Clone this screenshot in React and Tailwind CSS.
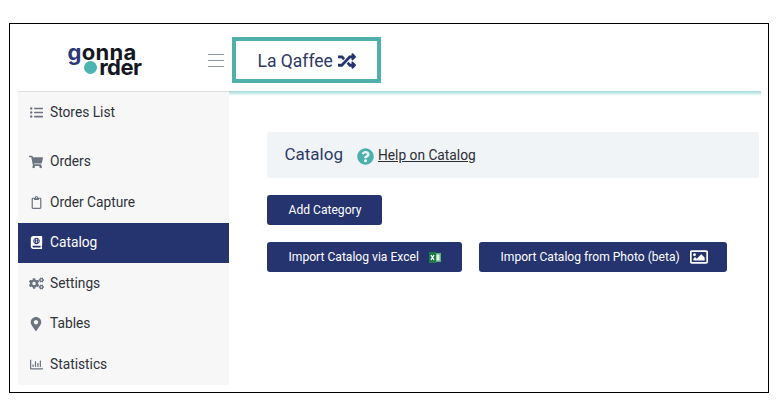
import { FaListUl, FaShoppingCart, FaRegClipboard, FaAtlas, FaCogs, FaMapMarkerAlt, FaRegChartBar, FaRandom, FaQuestionCircle, FaRegImage } from "react-icons/fa"

const menu = [
  { name: "Orders", icon: FaShoppingCart, size: 14 },
  { name: "Order Capture", icon: FaRegClipboard, size: 13 },
  { name: "Catalog", icon: FaAtlas, size: 13, active: true },
  { name: "Settings", icon: FaCogs, size: 15 },
  { name: "Tables", icon: FaMapMarkerAlt, size: 14 },
  { name: "Statistics", icon: FaRegChartBar, size: 13 },
]

function ExcelIcon() {
  return (
    <svg width="12" height="11" viewBox="0 0 12 11" className="shrink-0">
      <rect x="4" y="1" width="8" height="9" fill="#5fae7c" />
      <rect x="7.5" y="2.5" width="3" height="6" fill="#dcefe3" />
      <rect x="0" y="0" width="7" height="11" fill="#1f7a49" />
      <path d="M2 3 L5 8 M5 3 L2 8" stroke="#fff" strokeWidth="1.3" />
    </svg>
  )
}

function Logo() {
  return (
    <div className="w-[74px] mt-[4px] font-['Inter',sans-serif] font-bold text-[22px] leading-[14px] text-[#14171f]">
      <div className="tracking-[0.3px]">
        <span className="text-[#2a3a78]">g</span>onna
      </div>
      <div className="flex items-center justify-end tracking-[-0.5px]">
        <span className="w-[13px] h-[13px] mt-[2px] rounded-full bg-[#4cb5b2] mr-[2px]" />
        <span>rder</span>
      </div>
    </div>
  )
}

function ActionButton({ className, children }) {
  return (
    <button className={`h-[30px] rounded-[3px] bg-[#25336f] text-white text-[12.1px] flex items-center pl-[22px] ${className}`}>
      {children}
    </button>
  )
}

export default function App() {
  return (
    <div className="w-[781px] h-[415px] bg-white pt-[23px] pl-[9px] font-['Roboto',sans-serif] overflow-hidden">
      <div className="w-[760px] h-[370px] border-[1.5px] border-black pl-[7.5px] pr-[7.5px] flex flex-col">
        {/* top bar */}
        <div className="h-[67px] shrink-0 flex items-start">
          <div className="w-[211px] h-full flex items-center pl-[50px]">
            <Logo />
            <div className="ml-[66px] mt-[6px] flex flex-col gap-[4.5px]">
              <span className="block w-[16px] h-[1.5px] bg-[#8f97a2]" />
              <span className="block w-[16px] h-[1.5px] bg-[#8f97a2]" />
              <span className="block w-[16px] h-[1.5px] bg-[#8f97a2]" />
            </div>
          </div>
          <div className="ml-[3px] mt-[13px] w-[149px] h-[46px] border-[4px] border-[#50b0ac] flex items-center pl-[22px] pt-[2px] text-[#2c3a68] text-[17.5px]">
            La Qaffee
            <FaRandom className="ml-[5px] text-[#25336f]" size={18} />
          </div>
        </div>

        <div className="flex flex-1 min-h-0">
          {/* sidebar */}
          <aside className="w-[211px] h-[294px] shrink-0 bg-[#f7f7f8] border-t border-[#dcdee0] text-[13.75px] text-[#2f3338]">
            <div className="h-[40px] flex items-center pl-[11px] mb-[9.5px]">
              <span className="w-[15px] mr-[6.5px] flex justify-center text-[#6b7480]">
                <FaListUl size={13} />
              </span>
              <span>Stores List</span>
            </div>
            {menu.map((m) => (
              <div
                key={m.name}
                className={`h-[40.5px] flex items-center pl-[11px] ${m.active ? "bg-[#25336f] text-white" : ""}`}
              >
                <span className={`w-[15px] mr-[6.5px] flex justify-center ${m.active ? "text-white" : "text-[#6b7480]"}`}>
                  <m.icon size={m.size} />
                </span>
                <span>{m.name}</span>
              </div>
            ))}
          </aside>

          {/* main */}
          <main className="flex-1 min-w-0">
            <div className="h-[5px] bg-gradient-to-b from-[#9fdad8] to-white" />
            <div className="pl-[38px] pr-[2px] pt-[36px]">
              <div className="h-[46px] rounded-[2px] bg-[#f1f4f7] flex items-center pl-[18px]">
                <span className="text-[17px] text-[#2c3a68]">Catalog</span>
                <FaQuestionCircle className="ml-[14px] mt-[3px] text-[#4cb0ad]" size={17} />
                <span className="ml-[4px] mt-[1px] text-[13.75px] text-[#2b2e33] underline">Help on Catalog</span>
              </div>
              <ActionButton className="w-[115px] mt-[17px]">Add Category</ActionButton>
              <div className="flex gap-[17px] mt-[17px]">
                <ActionButton className="w-[195px]">
                  Import Catalog via Excel
                  <span className="ml-[10px]"><ExcelIcon /></span>
                </ActionButton>
                <ActionButton className="w-[248px]">
                  Import Catalog from Photo (beta)
                  <FaRegImage className="ml-[10px]" size={18} />
                </ActionButton>
              </div>
            </div>
          </main>
        </div>
      </div>
    </div>
  )
}
